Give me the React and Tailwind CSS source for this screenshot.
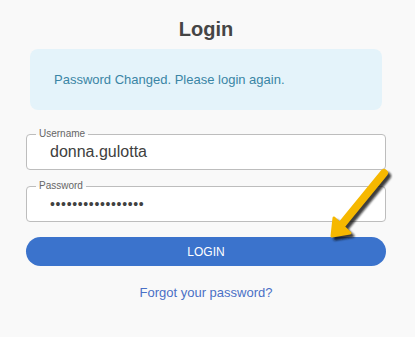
import React from "react";

function Field({ label, children, className }) {
  return (
    <div className={"relative h-[36px] border border-[#bdbdbd] rounded-[4px] bg-white flex items-center pl-[23px] " + className}>
      <span className="absolute -top-[7px] left-[9px] px-[3px] text-[10px] leading-[12px] text-[#666] bg-[linear-gradient(to_bottom,#f9f9f9_55%,#ffffff_55%)]">
        {label}
      </span>
      {children}
    </div>
  );
}

export default function App() {
  const font = { fontFamily: '"Liberation Sans", Arial, sans-serif' };
  return (
    <div className="relative w-[415px] h-[337px] bg-[#f9f9f9] overflow-hidden" style={font}>
      <div className="flex flex-col w-[360px] ml-[26px] pt-[17px]">
        <h1 className="text-center text-[20px] leading-[24px] font-bold text-[#454545]">Login</h1>
        <div className="mt-[8px] ml-[4px] w-[352px] h-[61px] rounded-[8px] bg-[#e4f3fa] flex items-center pl-[24px]">
          <span className="text-[13px] text-[#3a85a5]">Password Changed. Please login again.</span>
        </div>
        <Field label="Username" className="mt-[24px]">
          <span className="text-[16px] leading-[20px] text-[#404040]">donna.gulotta</span>
        </Field>
        <Field label="Password" className="mt-[16px]">
          <span className="text-[14px] leading-[20px] text-[#404040] tracking-[0.65px]">•••••••••••••••••</span>
        </Field>
        <button className="mt-[15px] h-[29px] rounded-full bg-[#3b73cc] text-white text-[12px] font-medium">LOGIN</button>
        <div className="mt-[19px] text-center text-[13px] leading-[15px] text-[#4a70c6]">Forgot your password?</div>
      </div>
      <svg className="absolute left-0 top-0" width="415" height="337" viewBox="0 0 415 337">
        <defs>
          <filter id="blur" x="-20%" y="-20%" width="140%" height="140%">
            <feGaussianBlur stdDeviation="1.2" />
          </filter>
        </defs>
        <g transform="translate(3,3)" opacity="0.8" filter="url(#blur)">
          <path d="M384 173 L339 228" stroke="#111" strokeWidth="8" strokeLinecap="round" fill="none" />
          <path d="M332 236 L334 218 L350 233 Z" fill="#111" stroke="#111" strokeWidth="3" strokeLinejoin="round" />
        </g>
        <path d="M384 173 L339 228" stroke="#f6b800" strokeWidth="8" strokeLinecap="round" fill="none" />
        <path d="M332 236 L334 218 L350 233 Z" fill="#f6b800" stroke="#f6b800" strokeWidth="3" strokeLinejoin="round" />
      </svg>
    </div>
  );
}
